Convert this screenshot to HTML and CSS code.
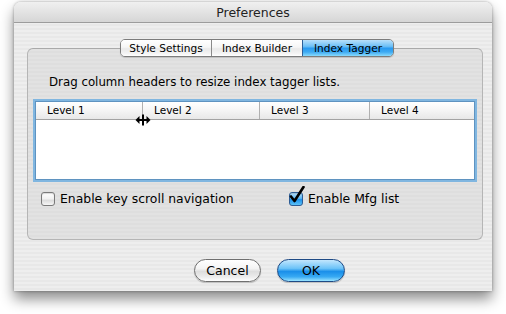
FILE: index.html
```html
<!DOCTYPE html>
<html>
<head>
<meta charset="utf-8">
<link rel="stylesheet" href="styles.css">
</head>
<body>
<div class="window">
  <div class="titlebar">Preferences</div>
  <div class="content">
    <div class="tabs">
      <span class="tab">Style Settings</span>
      <span class="tab">Index Builder</span>
      <span class="tab selected">Index Tagger</span>
    </div>
    <div class="group">
      <p class="hint">Drag column headers to resize index tagger lists.</p>
      <div class="table">
        <div class="thead">
          <div class="th c1">Level 1</div>
          <div class="th c2">Level 2</div>
          <div class="th c3">Level 3</div>
          <div class="th c4">Level 4</div>
        </div>
        <div class="tbody"></div>
        <svg class="cursor" width="16" height="12" viewBox="0 0 16 12">
          <path d="M7 0.5h2v11h-2z" fill="#000"/>
          <path d="M0.5 6l4-4v3h3v2h-3v3z" fill="#000"/>
          <path d="M15.5 6l-4-4v3h-3v2h3v3z" fill="#000"/>
        </svg>
      </div>
      <div class="options">
        <label class="check"><span class="box"></span>Enable key scroll navigation</label>
        <label class="check"><span class="box on"><svg class="tick" width="18" height="18" viewBox="0 0 18 18"><path d="M3 10.5l3.5 4.5L15.5 1" fill="none" stroke="#000" stroke-width="2.6" stroke-linecap="round" stroke-linejoin="round"/></svg></span>Enable Mfg list</label>
      </div>
    </div>
    <div class="buttons">
      <button class="btn">Cancel</button>
      <button class="btn default">OK</button>
    </div>
  </div>
</div>
</body>
</html>
```
FILE: styles.css
```css
html, body { margin: 0; padding: 0; background: #fff; }
body {
  width: 506px; height: 314px; overflow: hidden;
  font-family: "DejaVu Sans", "Liberation Sans", sans-serif;
  color: #000;
  padding: 2px 0 0 14px;
  box-sizing: border-box;
}
.window {
  width: 478px; height: 289px;
  border-radius: 7px 7px 0 0;
  background: repeating-linear-gradient(to bottom, #eeeeee 0 2px, #e8e8e8 2px 4px);
  box-shadow: 0 8px 14px rgba(0,0,0,0.45), 0 0 3px rgba(0,0,0,0.35);
  display: flex; flex-direction: column;
}
.titlebar {
  height: 20px;
  border-bottom: 1px solid #9c9c9c;
  border-radius: 7px 7px 0 0;
  background: linear-gradient(#f0f0f0, #d6d6d6);
  text-align: center;
  font-size: 12.5px; line-height: 21px;
  color: #222;
}
.content { flex: 1; display: flex; flex-direction: column; padding: 16px 9px 0 13px; }
.tabs {
  align-self: center; margin-left: 4px;
  display: flex; position: relative; z-index: 1;
  border: 1px solid #7c7c7c; border-radius: 5px;
  overflow: hidden;
  box-shadow: 0 1px 1px rgba(0,0,0,0.15);
}
.tab {
  width: 90px; height: 16px; line-height: 16px;
  text-align: center; font-size: 10.6px;
  background: linear-gradient(#ffffff 0%, #f6f6f6 45%, #e9e9e9 55%, #f4f4f4 85%, #ffffff 100%);
}
.tab + .tab { border-left: 1px solid #8a8a8a; }
.tab.selected {
  background: linear-gradient(#b9e0fb 0%, #6cbff6 40%, #2a9af0 52%, #3eaaf2 75%, #8adbfd 100%);
  border-left-color: #2d5f99;
}
.group {
  margin-top: -9px;
  height: 192px;
  border: 1px solid #b5b5b5;
  border-top-color: #a9a9a9;
  border-radius: 6px;
  background: repeating-linear-gradient(to bottom, #e2e2e2 0 2px, #dedede 2px 4px);
  padding: 0 5px;
  box-sizing: border-box;
}
.hint { margin: 25px 0 0 16px; font-size: 11.8px; line-height: 16px; }
.table {
  position: relative;
  margin-top: 9px;
  height: 83px;
  border: 2px solid #80b6e0;
  box-shadow: inset 0 0 0 1px #5f93c0;
  background: #fff;
  box-sizing: border-box;
  display: flex; flex-direction: column;
}
.thead {
  display: flex; height: 17px; margin: 1px 1px 0;
  border-bottom: 1px solid #a3a3a3;
  background: linear-gradient(#ffffff 0%, #f5f5f5 50%, #e8e8e8 100%);
}
.th { font-size: 10.5px; line-height: 17px; padding-left: 11px; box-sizing: border-box; }
.th + .th { border-left: 1px solid #b0b0b0; }
.c1 { width: 106px; }
.c2 { width: 117px; }
.c3 { width: 110px; }
.c4 { flex: 1; }
.tbody { flex: 1; }
.cursor { position: absolute; left: 100px; top: 13px; }
.options {
  display: grid; grid-template-columns: 248px auto;
  margin: 9px 0 0 8px;
}
.check { display: flex; align-items: center; font-size: 12.4px; line-height: 16px; }
.box {
  position: relative;
  width: 12px; height: 12px; margin-right: 5px;
  border: 1px solid #7a7a7a; border-radius: 3px;
  background: linear-gradient(#ffffff 0%, #f1f1f1 50%, #dcdcdc 60%, #f6f6f6 100%);
  box-shadow: inset 0 1px 1px rgba(0,0,0,0.15);
}
.box.on {
  border-color: #2c5c95;
  background: linear-gradient(#b9e0fb 0%, #5db8f4 45%, #1f92ec 55%, #5cc2f7 100%);
}
.tick { position: absolute; left: -2px; top: -7px; }
.buttons { display: flex; gap: 16px; padding: 19px 0 0 167px; }
.btn {
  width: 67px; height: 23px; padding: 0;
  font-family: inherit; font-size: 12.5px; color: #000;
  border: 1px solid #6f6f6f; border-radius: 12px;
  background: linear-gradient(#ffffff 0%, #f4f4f4 40%, #dedede 55%, #ececec 80%, #ffffff 100%);
  box-shadow: 0 1px 1px rgba(0,0,0,0.2);
}
.btn.default {
  width: 68px;
  border-color: #1e4a85;
  background: linear-gradient(#c2e6fd 0%, #6cc3f8 40%, #1a8fea 55%, #38aaf3 80%, #9be4ff 100%);
}
```
